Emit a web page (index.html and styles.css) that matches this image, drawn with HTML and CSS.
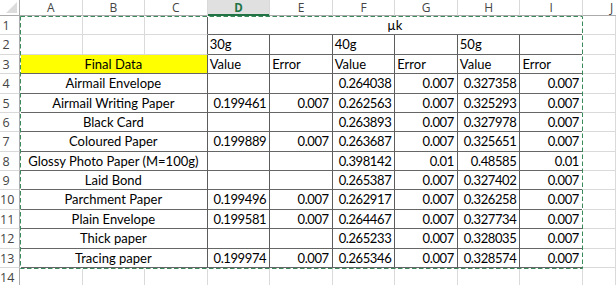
FILE: index.html
```html
<!DOCTYPE html>
<html>
<head>
<meta charset="utf-8">
<link rel="stylesheet" href="styles.css">
</head>
<body>
<div class="sheet">
  <div class="sheet-grid">
    <div class="hd corner"><svg class="corner-tri" width="20" height="16" viewBox="0 0 20 16"><polygon points="17,2 17,13 6,13" fill="#dcdcdc"/></svg></div>
    <div class="hd">A</div><div class="hd">B</div><div class="hd">C</div>
    <div class="hd hd-sel">D</div><div class="hd">E</div><div class="hd">F</div>
    <div class="hd">G</div><div class="hd">H</div><div class="hd">I</div><div class="hd hd-last">J</div>

    <div class="rh">1</div>
    <div class="c"></div><div class="c"></div><div class="c dr"></div>
    <div class="c b span6 ctr">µk</div>
    <div class="c"></div>

    <div class="rh">2</div>
    <div class="c"></div><div class="c"></div><div class="c dr"></div>
    <div class="c b l">30g</div><div class="c b"></div><div class="c b l">40g</div><div class="c b"></div><div class="c b l">50g</div><div class="c b"></div>
    <div class="c"></div>

    <div class="rh">3</div>
    <div class="c b span3 ctr yellow">Final Data</div>
    <div class="c b l">Value</div><div class="c b l">Error</div><div class="c b l">Value</div><div class="c b l">Error</div><div class="c b l">Value</div><div class="c b l">Error</div>
    <div class="c"></div>

    <div class="rh">4</div>
    <div class="c b span3 ctr">Airmail Envelope</div>
    <div class="c b r"></div><div class="c b r"></div><div class="c b r">0.264038</div><div class="c b r">0.007</div><div class="c b r">0.327358</div><div class="c b r">0.007</div>
    <div class="c"></div>

    <div class="rh">5</div>
    <div class="c b span3 ctr">Airmail Writing Paper</div>
    <div class="c b r">0.199461</div><div class="c b r">0.007</div><div class="c b r">0.262563</div><div class="c b r">0.007</div><div class="c b r">0.325293</div><div class="c b r">0.007</div>
    <div class="c"></div>

    <div class="rh">6</div>
    <div class="c b span3 ctr">Black Card</div>
    <div class="c b r"></div><div class="c b r"></div><div class="c b r">0.263893</div><div class="c b r">0.007</div><div class="c b r">0.327978</div><div class="c b r">0.007</div>
    <div class="c"></div>

    <div class="rh">7</div>
    <div class="c b span3 ctr">Coloured Paper</div>
    <div class="c b r">0.199889</div><div class="c b r">0.007</div><div class="c b r">0.263687</div><div class="c b r">0.007</div><div class="c b r">0.325651</div><div class="c b r">0.007</div>
    <div class="c"></div>

    <div class="rh">8</div>
    <div class="c b span3 ctr">Glossy Photo Paper (M=100g)</div>
    <div class="c b r"></div><div class="c b r"></div><div class="c b r">0.398142</div><div class="c b r">0.01</div><div class="c b r">0.48585</div><div class="c b r">0.01</div>
    <div class="c"></div>

    <div class="rh">9</div>
    <div class="c b span3 ctr">Laid Bond</div>
    <div class="c b r"></div><div class="c b r"></div><div class="c b r">0.265387</div><div class="c b r">0.007</div><div class="c b r">0.327402</div><div class="c b r">0.007</div>
    <div class="c"></div>

    <div class="rh">10</div>
    <div class="c b span3 ctr">Parchment Paper</div>
    <div class="c b r">0.199496</div><div class="c b r">0.007</div><div class="c b r">0.262917</div><div class="c b r">0.007</div><div class="c b r">0.326258</div><div class="c b r">0.007</div>
    <div class="c"></div>

    <div class="rh">11</div>
    <div class="c b span3 ctr">Plain Envelope</div>
    <div class="c b r">0.199581</div><div class="c b r">0.007</div><div class="c b r">0.264467</div><div class="c b r">0.007</div><div class="c b r">0.327734</div><div class="c b r">0.007</div>
    <div class="c"></div>

    <div class="rh">12</div>
    <div class="c b span3 ctr">Thick paper</div>
    <div class="c b r"></div><div class="c b r"></div><div class="c b r">0.265233</div><div class="c b r">0.007</div><div class="c b r">0.328035</div><div class="c b r">0.007</div>
    <div class="c"></div>

    <div class="rh">13</div>
    <div class="c b span3 ctr">Tracing paper</div>
    <div class="c b r">0.199974</div><div class="c b r">0.007</div><div class="c b r">0.265346</div><div class="c b r">0.007</div><div class="c b r">0.328574</div><div class="c b r">0.007</div>
    <div class="c"></div>

    <div class="rh">14</div>
    <div class="c"></div><div class="c"></div><div class="c"></div><div class="c"></div><div class="c"></div><div class="c"></div><div class="c"></div><div class="c"></div><div class="c"></div>
    <div class="c"></div>
  </div>
  <svg class="marquee" width="563" height="254" viewBox="0 0 563 254">
    <rect x="0.5" y="0.5" width="562" height="252" fill="none" stroke="#ffffff" stroke-width="1"/>
    <rect x="0.5" y="0.5" width="562" height="252" fill="none" stroke="#3b8a5b" stroke-width="1" stroke-dasharray="4.5 2.5"/>
  </svg>
</div>
</body>
</html>
```

FILE: styles.css
```css
html, body {
  margin: 0;
  padding: 0;
  background: #ffffff;
}

.sheet {
  position: relative;
  width: 616px;
  height: 285px;
  overflow: hidden;
}

.sheet-grid {
  display: grid;
  grid-template-columns: 20px repeat(9, 62.56px) 1fr;
  grid-template-rows: 16px repeat(14, 19.38px);
  font-family: Lato, "Open Sans", "Liberation Sans", sans-serif;
  font-size: 13px;
  color: #000;
}

.hd {
  box-sizing: border-box;
  border-right: 1px solid #d9d9d9;
  border-bottom: 1px solid #ababab;
  background: #ffffff;
  color: #444;
  font-family: "Open Sans", "Noto Sans", sans-serif;
  font-size: 12px;
  line-height: 15px;
  text-align: center;
  overflow: visible;
}

.hd.corner {
  border-right: 1px solid #ababab;
  position: relative;
}

.corner-tri {
  display: block;
}

.hd-sel {
  background: #e0e0e0;
  color: #217346;
  font-weight: 700;
  font-size: 11.5px;
  border-bottom-color: #217346;
  box-shadow: inset 0 -1px 0 #217346;
}

.hd-last {
  text-align: left;
  padding-left: 27px;
  border-right: none;
}

.rh {
  box-sizing: border-box;
  border-right: 1px solid #ababab;
  border-bottom: 1px solid #d9d9d9;
  color: #444;
  font-family: "Open Sans", "Noto Sans", sans-serif;
  font-size: 12.5px;
  line-height: 19px;
  text-align: center;
  padding-right: 7px;
  white-space: nowrap;
  overflow: visible;
}

.c {
  box-sizing: border-box;
  border-right: 1px solid #dadada;
  border-bottom: 1px solid #dadada;
  line-height: 18.8px;
  white-space: nowrap;
  overflow: hidden;
}

.c.dr {
  border-right-color: #5c5c5c;
}

.c.b {
  border-right-color: #5c5c5c;
  border-bottom-color: #666666;
}

.span3 {
  grid-column: span 3;
}

.span6 {
  grid-column: span 6;
}

.ctr {
  text-align: center;
}

.l {
  text-align: left;
  padding-left: 2px;
}

.r {
  text-align: right;
  padding-right: 3px;
  letter-spacing: -0.4px;
}

.yellow {
  background: #ffff00;
}

.marquee {
  position: absolute;
  left: 20px;
  top: 16px;
}
```
